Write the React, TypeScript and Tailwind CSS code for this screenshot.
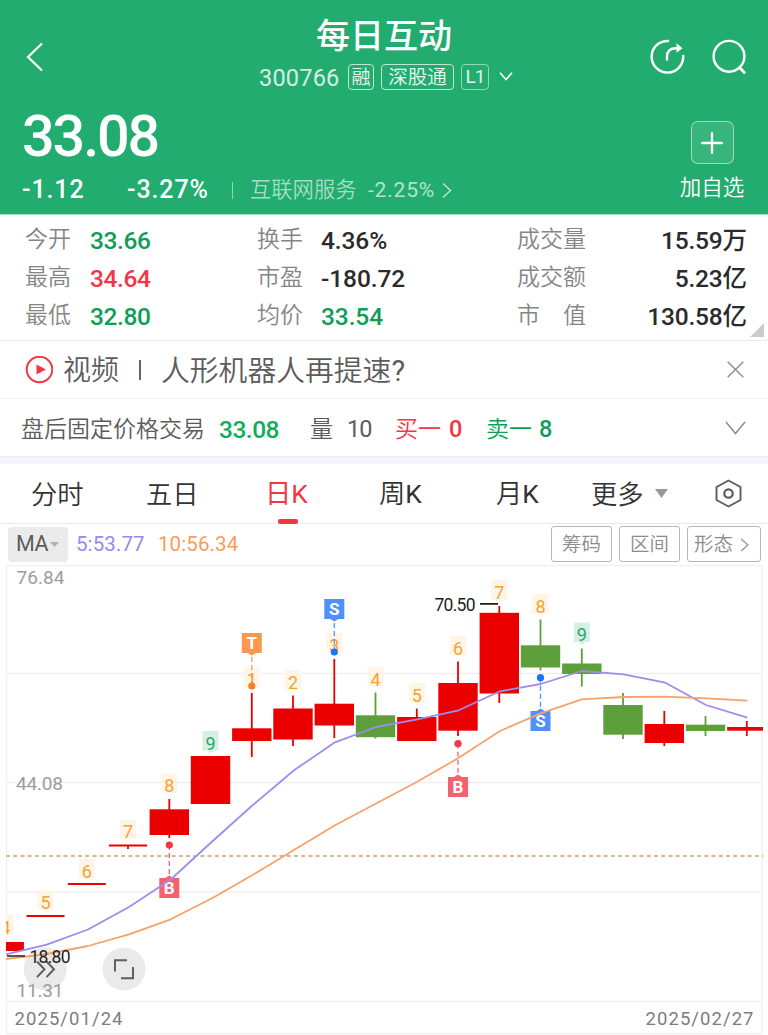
import React from 'react';

type Tone = 'up' | 'down';

interface Candle {
  x: number;
  top: number;
  bottom: number;
  high: number;
  low: number;
  tone: Tone;
}

interface Count {
  x: number;
  y: number;
  n: string;
  last?: boolean;
}

interface Signal {
  x: number;
  box: number;
  dot: number;
  letter: string;
  fill: string;
  dotFill: string;
}

const COLORS: Record<Tone, string> = { up: '#eb0000', down: '#5d9f3a' };

const CANDLES: Candle[] = [
  { x: 4.2, top: 942, bottom: 951, high: 942, low: 951, tone: 'up' },
  { x: 45.5, top: 915, bottom: 917, high: 915, low: 917, tone: 'up' },
  { x: 86.8, top: 883, bottom: 885, high: 883, low: 885, tone: 'up' },
  { x: 128, top: 844.5, bottom: 846.5, high: 845, low: 849, tone: 'up' },
  { x: 169.3, top: 809.3, bottom: 835, high: 799, low: 838, tone: 'up' },
  { x: 210.5, top: 756, bottom: 804, high: 756, low: 804, tone: 'up' },
  { x: 251.8, top: 728.3, bottom: 741, high: 693, low: 757, tone: 'up' },
  { x: 293, top: 708.5, bottom: 739.5, high: 695.5, low: 746, tone: 'up' },
  { x: 334.3, top: 703.7, bottom: 725.5, high: 659, low: 738, tone: 'up' },
  { x: 375.5, top: 715.3, bottom: 737.2, high: 692.5, low: 738.5, tone: 'down' },
  { x: 416.8, top: 717, bottom: 741, high: 708.5, low: 741, tone: 'up' },
  { x: 458, top: 683, bottom: 730.7, high: 661.5, low: 736, tone: 'up' },
  { x: 499.3, top: 612.8, bottom: 693.5, high: 606, low: 703, tone: 'up' },
  { x: 540.5, top: 645.3, bottom: 667.5, high: 619.5, low: 670.5, tone: 'down' },
  { x: 581.8, top: 663.5, bottom: 674, high: 648.5, low: 686.5, tone: 'down' },
  { x: 623, top: 705, bottom: 734.7, high: 693, low: 739, tone: 'down' },
  { x: 664.3, top: 724, bottom: 743, high: 711, low: 746, tone: 'up' },
  { x: 705.5, top: 724.7, bottom: 731, high: 716, low: 736, tone: 'down' },
  { x: 746.8, top: 727, bottom: 730.7, high: 721, low: 736, tone: 'up' },
];

const COUNTS: Count[] = [
  { x: 5.5, y: 915, n: '4' },
  { x: 45.5, y: 890.5, n: '5' },
  { x: 86.8, y: 859, n: '6' },
  { x: 128, y: 819.5, n: '7' },
  { x: 169.3, y: 773.5, n: '8' },
  { x: 210.5, y: 731, n: '9', last: true },
  { x: 251.8, y: 667.5, n: '1' },
  { x: 293, y: 670, n: '2' },
  { x: 334.3, y: 633, n: '3' },
  { x: 375.5, y: 667, n: '4' },
  { x: 416.8, y: 683, n: '5' },
  { x: 458, y: 636, n: '6' },
  { x: 499.3, y: 580, n: '7' },
  { x: 540.5, y: 594, n: '8' },
  { x: 581.8, y: 622.5, n: '9', last: true },
];

const SIGNALS: Signal[] = [
  { x: 169.3, box: 878, dot: 845, letter: 'B', fill: '#f6616e', dotFill: '#f23645' },
  { x: 251.8, box: 633, dot: 686, letter: 'T', fill: '#fb974f', dotFill: '#fb7d21' },
  { x: 334.3, box: 599, dot: 652, letter: 'S', fill: '#4f90fb', dotFill: '#1b74fb' },
  { x: 458, box: 777, dot: 743.7, letter: 'B', fill: '#f6616e', dotFill: '#f23645' },
  { x: 540.5, box: 711, dot: 677.7, letter: 'S', fill: '#4f90fb', dotFill: '#1b74fb' },
];

const MA5 =
  '6,954.3 46.7,944.7 88,929.5 129,907 170.7,879.5 210.5,843 251.7,806 294,770.3 335,742.3 376,727 417.3,719.3 458.7,710.3 500,691.3 540.7,684 581.7,671 623.7,674.3 665.3,682.7 706,705 747.3,717.7';
const MA10 =
  '6,959 46.7,954 88,946 129,934.3 170.7,919.3 213,897.7 256,873 294,850 335,825.3 375.7,803.7 416.7,782 458,758.3 500,731 540.7,713.3 581.7,699.3 623.7,697 665.3,696.7 706,698.3 747.3,700.7';

const STATS = [
  ['今开', '33.66', 'text-[#0f9d58]', '换手', '4.36%', 'text-[#2b2b2b]', '成交量', '15.59', '万'],
  ['最高', '34.64', 'text-[#f23645]', '市盈', '-180.72', 'text-[#2b2b2b]', '成交额', '5.23', '亿'],
  ['最低', '32.80', 'text-[#0f9d58]', '均价', '33.54', 'text-[#0f9d58]', '市　值', '130.58', '亿'],
];

const Header: React.FC = () => (
  <header className="h-[215px] border-b border-[#a5e0c4] bg-[#22ac6f] text-white">
    <div className="flex h-[100px] items-start pl-[26px] pr-[20px]">
      <svg className="mt-[41px] h-8 w-[18px]" viewBox="0 0 18 32" fill="none" stroke="currentColor" strokeWidth="2.2">
        <path d="M16 2.5 2 16l14 13.5" />
      </svg>
      <div className="ml-[215px] flex w-[254px] flex-col items-center">
        <h1 className="mt-[11px] h-[50px] whitespace-nowrap pr-[4px] text-[34px] font-medium leading-[50px]">每日互动</h1>
        <div className="mt-[2px] flex h-[27px] w-full items-center">
          <span className="w-[89px] pt-[3px] text-[23.5px] leading-[27px] tracking-[0.2px] text-white/80">300766</span>
          <span className="flex h-[26px] w-[26px] items-center justify-center rounded-[4px] border border-white/70 pt-[2px] text-[19px] font-[350] leading-none text-white/90">融</span>
          <span className="ml-[7px] flex h-[26px] w-[73px] items-center justify-center whitespace-nowrap rounded-[4px] border border-white/70 pt-[2px] text-[19.5px] font-[350] leading-none text-white/90">深股通</span>
          <span className="ml-[7px] flex h-[26px] w-[28px] items-center justify-center rounded-[4px] border border-white/50 text-[19px] leading-none tracking-[-1px] text-white/85">L1</span>
          <svg className="ml-[10px] h-[9px] w-[14px] shrink-0" viewBox="0 0 14 9" fill="none" stroke="currentColor" strokeWidth="1.6">
            <path d="m1 .8 6 6.7 6-6.7" />
          </svg>
        </div>
      </div>
      <svg className="ml-auto mt-[38px] h-[37px] w-[37px]" viewBox="0 0 37 37" fill="none" stroke="currentColor" strokeWidth="2.4" strokeLinecap="round">
        <path d="M19.2 3A15.8 15.8 0 1 0 34.2 18" />
        <path d="M18 21.5v-2.7c0-5.5 3.3-8.600 9-8.600h4" />
        <path d="m27.5 5.2 6 5-6 4.5z" fill="currentColor" stroke="none" />
      </svg>
      <svg className="ml-[25px] mt-[38px] h-[37px] w-[37px]" viewBox="0 0 37 37" fill="none" stroke="currentColor" strokeWidth="2.4" strokeLinecap="round">
        <circle cx="18" cy="18.3" r="15.4" />
        <path d="m28.5 29.5 4.800 5" strokeWidth="2.8" />
      </svg>
    </div>

    <div className="flex h-[114px] justify-between">
      <div className="pl-[22px]">
        <div className="mt-[5px] h-[62px] text-[57.5px] font-medium leading-[63px] tracking-[-2.1px]">33.08</div>
        <div className="mt-[9px] flex h-7 items-center whitespace-nowrap leading-7">
          <span className="w-[105px] text-[25px] font-medium tracking-[0.9px]">-1.12</span>
          <span className="w-[105px] text-[25px] font-medium tracking-[0.9px]">-3.27%</span>
          <span className="h-[17px] w-px bg-white/50" />
          <span className="ml-[17px] w-[118px] text-[21.3px] font-[350] text-white/60">互联网服务</span>
          <span className="text-[21px] tracking-[0.8px] text-white/65">-2.25%</span>
          <svg className="ml-[7px] h-[17px] w-[10px]" viewBox="0 0 10 17" fill="none" stroke="currentColor" strokeWidth="1.4" opacity="0.7">
            <path d="m1 1.5 7.5 7L1 15.5" />
          </svg>
        </div>
      </div>
      <button className="mr-[20px] mt-[21px] flex w-[72px] flex-col items-center">
        <span className="flex h-[43px] w-[43px] items-center justify-center rounded-[7px] border border-white/50 bg-white/10">
          <svg className="h-[22px] w-[22px]" viewBox="0 0 22 22" stroke="currentColor" strokeWidth="2.4" strokeLinecap="round">
            <path d="M1.2 11h19.6M11 1.2v19.6" />
          </svg>
        </span>
        <span className="mt-[10px] whitespace-nowrap text-[21.5px] font-[350] leading-7">加自选</span>
      </button>
    </div>
  </header>
);

const Stats: React.FC = () => (
  <section className="relative h-[126px] border-b border-[#ececec] bg-white pt-[6px]">
    {STATS.map(([a, av, ac, b, bv, bc, c, cv, unit]) => (
      <div key={a} className="flex h-[38px] items-center whitespace-nowrap pl-[25px] pr-[21px] text-[24.5px] leading-[38px]">
        <span className="w-[65px] text-[23px] font-[350] text-[#858585]">{a}</span>
        <span className={`w-[167px] pt-px font-medium tracking-[-0.4px] ${ac}`}>{av}</span>
        <span className="w-[64px] text-[23px] font-[350] text-[#858585]">{b}</span>
        <span className={`w-[196px] pt-px font-medium tracking-[-0.1px] ${bc}`}>{bv}</span>
        <span className="text-[23px] font-[350] text-[#858585]">{c}</span>
        <span className="ml-auto pt-px font-medium tracking-[-0.2px] text-[#2b2b2b]">{cv}</span>
        <span className="pt-px font-medium text-[#2b2b2b]">{unit}</span>
      </div>
    ))}
    <svg className="absolute bottom-[3px] right-[4px] h-[14px] w-[14px]" viewBox="0 0 14 14">
      <path d="M14 0v14H0z" fill="#cbcbcb" />
    </svg>
  </section>
);

const Notices: React.FC = () => (
  <section className="bg-white text-[#5c5c5c]">
    <div className="flex h-[58px] items-center whitespace-nowrap border-b border-[#f1f1f1] pl-[25px] pr-[24px] text-[28px] leading-[58px]">
      <svg className="h-[28px] w-[28px]" viewBox="0 0 28 28">
        <circle cx="14.5" cy="13.5" r="12.8" fill="none" stroke="#f23645" strokeWidth="2" />
        <path d="m11.5 8.5 9.5 5-9.5 5z" fill="#f23645" />
      </svg>
      <span className="ml-[10px] w-[76px] pt-[2px] font-[350]">视频</span>
      <span className="h-[20px] w-[2px] bg-[#666666]" />
      <span className="ml-[20px] pt-[2px] text-[28.8px] font-[350]">
        人形机器人再提速<span className="font-normal">?</span>
      </span>
      <svg className="ml-auto h-[17px] w-[17px]" viewBox="0 0 17 17" stroke="#8c8c8c" strokeWidth="1.4">
        <path d="m.7.7 15.6 15.6M16.3.7.7 16.3" />
      </svg>
    </div>
    <div className="flex h-[58px] items-center whitespace-nowrap border-b border-[#ededf0] pl-[21px] pr-[22px] text-[23px] leading-[57px]">
      <span className="w-[198px] pt-[3px] font-[350]">盘后固定价格交易</span>
      <span className="w-[91px] pt-[3px] text-[24.5px] font-medium tracking-[-0.5px] text-[#0fae5c]">33.08</span>
      <span className="w-[37px] pt-[3px] font-[350]">量</span>
      <span className="w-[48px] pt-[3px] text-[23.5px] tracking-[-1px]">10</span>
      <span className="w-[54px] pt-[3px] font-[350] text-[#f23645]">买一</span>
      <span className="w-[37px] pt-[3px] text-[23.5px] font-medium text-[#f23645]">0</span>
      <span className="w-[53px] pt-[3px] font-[350] text-[#0f9d58]">卖一</span>
      <span className="pt-[3px] text-[23.5px] font-medium text-[#0f9d58]">8</span>
      <svg className="ml-auto h-[14px] w-[21px]" viewBox="0 0 21 14" fill="none" stroke="#8c8c8c" strokeWidth="1.5">
        <path d="m1 1 9.5 11.5L20 1" />
      </svg>
    </div>
    <div className="h-[7px] bg-[#f2f4fa]" />
  </section>
);

const Tabs: React.FC = () => (
  <nav className="flex h-[60px] items-center whitespace-nowrap border-b border-[#e9e9e9] bg-white pl-[31px] pr-[26px] text-[26.3px] font-[350] leading-[62px] text-[#333333]">
    <span className="w-[115px] pt-[2px]">分时</span>
    <span className="w-[119px] pt-[2px]">五日</span>
    <span className="relative w-[114px] pt-px font-normal text-[#f23645]">
      日K
      <span className="absolute bottom-px left-[13px] h-[5px] w-[20px] rounded-[2px] bg-[#f23645]" />
    </span>
    <span className="w-[117px] pt-px">周<span className="font-normal">K</span></span>
    <span className="w-[95px] pt-px">月<span className="font-normal">K</span></span>
    <span className="pt-[2px]">更多</span>
    <svg className="ml-[11px] h-[9px] w-[13px]" viewBox="0 0 13 9">
      <path d="M0 0h13L6.5 9z" fill="#999999" />
    </svg>
    <svg className="ml-auto h-[29px] w-[27px]" viewBox="0 0 27 29" fill="none" stroke="#5c5c5c" strokeWidth="1.9" strokeLinejoin="round">
      <path d="M13.5 1.5 25.5 8v13l-12 6.5L1.5 21V8z" />
      <circle cx="13.5" cy="14.5" r="4.2" strokeWidth="2.2" />
    </svg>
  </nav>
);

const Toolbar: React.FC = () => (
  <div className="flex h-[41px] items-center whitespace-nowrap bg-white pb-px pl-[8px] pr-[7px]">
    <div className="flex h-[35px] w-[60px] items-center rounded-[4px] bg-[#ebebeb] pl-[8px] pt-px text-[21.5px] tracking-[-0.4px] text-[#5c5c5c]">
      MA
      <svg className="ml-[2px] h-[5px] w-[9px]" viewBox="0 0 9 5">
        <path d="M0 0h9L4.5 5z" fill="#b0b0b0" />
      </svg>
    </div>
    <span className="ml-[8px] w-[82px] pt-px text-[20.5px] tracking-[0.1px] text-[#9d86ee]">5:53.77</span>
    <span className="pt-px text-[20.5px] tracking-[0.1px] text-[#f89c5c]">10:56.34</span>
    <div className="ml-auto flex gap-[7px] text-[19.5px] font-[350] text-[#8c8c8c]">
      <span className="flex h-[36px] w-[61px] items-center justify-center rounded-[3px] border border-[#b8b8b8] pt-px">筹码</span>
      <span className="flex h-[36px] w-[61px] items-center justify-center rounded-[3px] border border-[#b8b8b8] pt-px">区间</span>
      <span className="flex h-[36px] w-[74px] items-center rounded-[3px] border border-[#b8b8b8] pl-[6px] pt-px">
        形态
        <svg className="ml-[7px] h-[14px] w-[9px]" viewBox="0 0 9 14" fill="none" stroke="#999999" strokeWidth="1.4">
          <path d="m1 1 7 6-7 6" />
        </svg>
      </span>
    </div>
  </div>
);

const SignalMark: React.FC<{ signal: Signal }> = ({ signal: { x, box, dot, letter, fill, dotFill } }) => {
  const below = box > dot;
  const edge = below ? box : box + 20;
  const tip = below ? edge - 2.5 : edge + 2.5;
  return (
    <g>
      <path d={`M${x} ${dot}V${tip}`} stroke={fill} strokeWidth="1.3" strokeDasharray="5 3" />
      <rect x={x - 10} y={box} width="20" height="20" fill={fill} />
      <path d={`M${x - 4} ${edge}L${x} ${tip}L${x + 4} ${edge}z`} fill={fill} />
      <circle cx={x} cy={dot} r="3.6" fill={dotFill} />
      <text x={x} y={box + 16} textAnchor="middle" fontSize="17" fontWeight="700" fill="#fff">{letter}</text>
    </g>
  );
};

const KChart: React.FC = () => (
  <svg className="block h-[470px] w-[768px] bg-white" viewBox="0 565 768 470">
    <defs>
      <clipPath id="plot">
        <rect x="6" y="565" width="757" height="470" />
      </clipPath>
    </defs>
    <path
      d="M6 565.5H762M6 673.5H762M6 782.5H762M6 892H762M6 1001.5H762M6 1033.5H762M6.5 565V1034M762 565V1034"
      fill="none"
      stroke="#f0f0f0"
      strokeWidth="1.3"
    />
    <path d="M6 856H763" stroke="#d9b88f" strokeWidth="1.8" strokeDasharray="4 3.2" />

    <g clipPath="url(#plot)">
      {COUNTS.map(({ x, y, n, last }) => (
        <g key={x} fontSize="18">
          <rect x={x - 8} y={y} width="16" height="19.5" fill={last ? '#d5f0e3' : '#fef5e7'} />
          {last && <path d={`M${x - 3} ${y + 19.5}h6l-3 3z`} fill="#d5f0e3" />}
          <text x={x} y={y + 18.5} textAnchor="middle" fill={last ? '#1fab6b' : '#f5a331'}>{n}</text>
        </g>
      ))}
      {CANDLES.map(({ x, top, bottom, high, low, tone }) => (
        <g key={x} fill={COLORS[tone]}>
          <rect x={x - 0.9} y={high} width="1.8" height={low - high} />
          <rect x={bottom - top < 3 ? x - 19 : x - 19.7} y={top} width={bottom - top < 3 ? 38 : 39.4} height={bottom - top} />
        </g>
      ))}
    </g>

    {SIGNALS.map((s) => (
      <SignalMark key={s.x} signal={s} />
    ))}

    {/* floating buttons */}
    <g fill="none" stroke="#5f5f5f" strokeWidth="2">
      <circle cx="45.2" cy="969" r="21.5" fill="#eaeaea" stroke="none" />
      <circle cx="124" cy="969" r="21.5" fill="#eaeaea" stroke="none" />
      <path d="m37 961.5 7.5 7.8-7.5 7.8M46.5 961.5l7.5 7.8-7.5 7.8" />
      <path d="M115 971.5V960.3h12M133 967v11.2h-12" />
    </g>

    <g fill="none" strokeWidth="1.8" strokeLinejoin="round">
      <polyline points={MA5} stroke="#a08bee" />
      <polyline points={MA10} stroke="#f6a26b" />
    </g>

    <g fill="#9c9c9c" fontSize="19">
      <text x="16.5" y="584" textLength="48">76.84</text>
      <text x="16" y="790" textLength="47">44.08</text>
      <text x="16.5" y="996.5" textLength="47">11.31</text>
    </g>
    <g fill="#1f1f1f" fontSize="17.5">
      <path d="M7 956h18M480 603.8h18" stroke="#1f1f1f" strokeWidth="1.7" />
      <text x="29.5" y="963" textLength="41">18.80</text>
      <text x="434.5" y="611" textLength="41">70.50</text>
    </g>
    <g fill="#7d7d7d" fontSize="18.5">
      <text x="14.5" y="1025" textLength="108">2025/01/24</text>
      <text x="645.5" y="1025" textLength="108">2025/02/27</text>
    </g>
  </svg>
);

const App: React.FC = () => {
  return (
    <main className="h-[1035px] w-[768px] overflow-hidden bg-white font-[Roboto,'Noto_Sans_CJK_SC',sans-serif]">
      <Header />
      <Stats />
      <Notices />
      <Tabs />
      <Toolbar />
      <KChart />
    </main>
  );
};

export default App;
